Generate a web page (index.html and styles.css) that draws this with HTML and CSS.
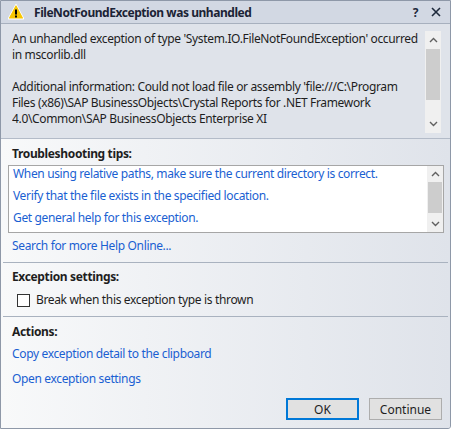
FILE: index.html
```html
<!DOCTYPE html>
<html>
<head>
<meta charset="utf-8">
<link rel="stylesheet" href="styles.css">
</head>
<body>
<div class="window">
  <div class="titlebar">
    <svg class="warn" width="16" height="16" viewBox="0 0 16 16">
      <path d="M8 0.8 L15.4 14.6 L0.6 14.6 Z" fill="#ffffff" stroke="#ffffff" stroke-width="1.6" stroke-linejoin="round"/>
      <path d="M8 2 L14.4 14 L1.6 14 Z" fill="#f7c600" stroke="#f7c600" stroke-width="1.2" stroke-linejoin="round"/>
      <rect x="7" y="5.5" width="2" height="5" fill="#000"/>
      <rect x="7" y="11.5" width="2" height="2" fill="#000"/>
    </svg>
    <span class="title">FileNotFoundException was unhandled</span>
    <span class="tb-btn help">?</span>
    <svg class="tb-btn close" width="10" height="10" viewBox="0 0 10 10"><path d="M1 1 L9 9 M9 1 L1 9" stroke="#1e2a3c" stroke-width="1.6"/></svg>
  </div>
  <div class="message">
    <div class="msg-text">
      <div class="line">An unhandled exception of type 'System.IO.FileNotFoundException' occurred</div>
      <div class="line">in mscorlib.dll</div>
      <div class="line">&nbsp;</div>
      <div class="line">Additional information: Could not load file or assembly 'file:///C:\Program</div>
      <div class="line">Files (x86)\SAP BusinessObjects\Crystal Reports for .NET Framework</div>
      <div class="line">4.0\Common\SAP BusinessObjects Enterprise XI</div>
    </div>
    <div class="vscroll tall">
      <svg class="arrow" width="9" height="6" viewBox="0 0 9 6"><path d="M1 5 L4.5 1.5 L8 5" fill="none" stroke="#606060" stroke-width="1.4"/></svg>
      <div class="track"><div class="thumb thumb-top"></div></div>
      <svg class="arrow" width="9" height="6" viewBox="0 0 9 6"><path d="M1 1 L4.5 4.5 L8 1" fill="none" stroke="#606060" stroke-width="1.4"/></svg>
    </div>
  </div>
  <div class="body">
    <div class="section tips">
      <div class="heading">Troubleshooting tips:</div>
      <div class="tipbox">
        <div class="tiplist">
          <a class="link tip">When using relative paths, make sure the current directory is correct.</a>
          <a class="link tip">Verify that the file exists in the specified location.</a>
          <a class="link tip">Get general help for this exception.</a>
        </div>
        <div class="vscroll short">
          <svg class="arrow" width="9" height="6" viewBox="0 0 9 6"><path d="M1 5 L4.5 1.5 L8 5" fill="none" stroke="#606060" stroke-width="1.4"/></svg>
          <div class="track"><div class="thumb thumb-small"></div></div>
          <svg class="arrow" width="9" height="6" viewBox="0 0 9 6"><path d="M1 1 L4.5 4.5 L8 1" fill="none" stroke="#606060" stroke-width="1.4"/></svg>
        </div>
      </div>
      <a class="link search">Search for more Help Online...</a>
    </div>
    <div class="section settings">
      <div class="heading">Exception settings:</div>
      <label class="check"><span class="box"></span><span>Break when this exception type is thrown</span></label>
    </div>
    <div class="section actions">
      <div class="heading">Actions:</div>
      <a class="link action">Copy exception detail to the clipboard</a>
      <a class="link action">Open exception settings</a>
      <div class="buttons">
        <button class="btn default">OK</button>
        <button class="btn">Continue</button>
      </div>
    </div>
  </div>
</div>
</body>
</html>
```
FILE: styles.css
```css
html, body {
  margin: 0;
  padding: 0;
  background: #ffffff;
}
body {
  font-family: "Noto Sans", "Open Sans", sans-serif;
  font-size: 12px;
  letter-spacing: -0.35px;
  color: #1e1e1e;
}
.window {
  width: 451px;
  height: 429px;
  box-sizing: border-box;
  border: 1px solid #8e98a8;
  border-bottom-right-radius: 3px;
  display: flex;
  flex-direction: column;
  overflow: hidden;
  background: #dfe3ea;
}
.titlebar {
  height: 22px;
  flex: none;
  display: flex;
  align-items: center;
  background: #d2d8e3;
  border-bottom: 1px solid #a7b0be;
  padding-left: 7px;
  padding-right: 9px;
}
.warn {
  flex: none;
}
.title {
  margin-left: 10px;
  font-weight: bold;
  font-size: 12px;
  letter-spacing: -0.45px;
  color: #1b2335;
  flex: 1;
}
.tb-btn.help {
  font-weight: bold;
  font-size: 12px;
  color: #1e2a3c;
  margin-right: 13px;
}
.message {
  height: 115px;
  flex: none;
  box-sizing: border-box;
  display: flex;
  padding: 7px 9px 0 11px;
  border-bottom: 1px solid #b3bbc8;
}
.msg-text {
  flex: 1;
  min-width: 0;
  overflow: hidden;
  white-space: nowrap;
  line-height: 16px;
}
.vscroll {
  flex: none;
  width: 16px;
  background: #f0f0f0;
  display: flex;
  flex-direction: column;
  align-items: center;
}
.vscroll.tall {
  height: 102px;
}
.vscroll .arrow {
  flex: none;
  margin: 6px 0;
}
.vscroll .track {
  flex: 1;
  align-self: stretch;
}
.thumb {
  background: #cdcdcd;
  margin: 0 1px;
}
.thumb-top {
  height: 51px;
}
.thumb-small {
  height: 31px;
}
.body {
  flex: 1;
  background: linear-gradient(to right, #f8f9fa, #dfe3ea);
  display: flex;
  flex-direction: column;
}
.section {
  display: flex;
  flex-direction: column;
  border-bottom: 1px solid #a9b2bf;
  margin: 0 2px;
  padding: 0 9px;
}
.heading {
  font-weight: bold;
  line-height: 16px;
}
.link {
  color: #1a5fd2;
  line-height: 16px;
  display: block;
}
.tips {
  padding-top: 7px;
  height: 124px;
  box-sizing: border-box;
}
.tipbox {
  margin: 3px 0 0 -4px;
  height: 68px;
  box-sizing: border-box;
  border: 1px solid #a6a6a6;
  background: #ffffff;
  display: flex;
  width: 436px;
}
.tiplist {
  flex: 1;
  min-width: 0;
  white-space: nowrap;
  padding: 0 0 0 4px;
  display: flex;
  flex-direction: column;
  gap: 6px;
}
.vscroll.short {
  height: 66px;
}
.vscroll.short .arrow {
  margin: 5px 0;
}
.search {
  margin-top: 5px;
}
.settings {
  padding-top: 6px;
  height: 54px;
  box-sizing: border-box;
}
.check {
  display: flex;
  align-items: center;
  margin-top: 7px;
  margin-left: 5px;
  line-height: 16px;
}
.check .box {
  width: 11px;
  height: 11px;
  border: 1px solid #333333;
  background: #ffffff;
  margin-right: 6px;
}
.actions {
  flex: 1;
  border-bottom: none;
  padding-top: 7px;
}
.action {
  margin-top: 6px;
}
.action + .action {
  margin-top: 9px;
}
.buttons {
  margin-top: auto;
  margin-bottom: 8px;
  display: flex;
  justify-content: flex-end;
  gap: 10px;
  margin-right: -3px;
}
.btn {
  width: 73px;
  height: 22px;
  box-sizing: border-box;
  background: #e1e1e1;
  border: 1px solid #adadad;
  font-family: inherit;
  font-size: 12px;
  letter-spacing: 0;
  color: #1e1e1e;
  padding: 0;
}
.btn.default {
  border: 2px solid #0078d7;
}
```
